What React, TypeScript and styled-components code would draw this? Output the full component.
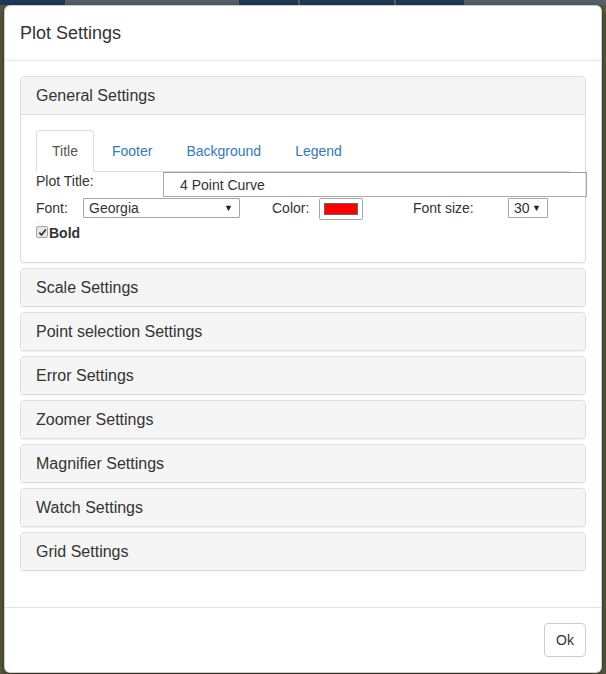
import React from "react";
import styled, { createGlobalStyle } from "styled-components";

const Global = createGlobalStyle`
  html, body { margin: 0; padding: 0; }
  body {
    width: 606px;
    height: 674px;
    overflow: hidden;
    font-family: "Liberation Sans", Arial, sans-serif;
    font-size: 14px;
    color: #333;
    background:
      linear-gradient(to right, #1f3a58 0 65px, #56616b 65px 239px, #1f3a58 239px 298px, #56616b 298px 300px, #1f3a58 300px 394px, #56616b 394px 396px, #1f3a58 396px 464px, #56616b 464px) top / 100% 5px no-repeat,
      #5c5a40;
  }
  * { box-sizing: border-box; }
`;

const Page = styled.div`
  padding: 5px 4px 0 4px;
`;

const Modal = styled.div`
  width: 598px;
  background: #fff;
  border: 1px solid rgba(0, 0, 0, 0.2);
  border-radius: 6px;
  box-shadow: 0 3px 9px rgba(0, 0, 0, 0.5);
`;

const Header = styled.div`
  padding: 15px;
  border-bottom: 1px solid #e5e5e5;
`;

const Title = styled.h4`
  margin: 0;
  font-size: 18px;
  font-weight: 500;
  line-height: 24px;
`;

const Body = styled.div`
  padding: 15px;
`;

const PanelGroup = styled.div`
  display: flex;
  flex-direction: column;
  gap: 5px;
  margin-bottom: 21px;
`;

const Panel = styled.div`
  border: 1px solid #ddd;
  border-radius: 4px;
  background: #fff;
  box-shadow: 0 1px 1px rgba(0, 0, 0, 0.05);
`;

const PanelHeading = styled.div<{ $open?: boolean }>`
  background: #f5f5f5;
  color: #333;
  padding: 10px 15px;
  border-radius: ${(p) => (p.$open ? "3px 3px 0 0" : "3px")};
  border-bottom: ${(p) => (p.$open ? "1px solid #ddd" : "none")};
  font-size: 16px;
  line-height: 17px;
`;

const PanelBody = styled.div`
  padding: 15px 15px 21px;
`;

const Tabs = styled.ul`
  display: flex;
  list-style: none;
  margin: 0;
  padding: 0;
  border-bottom: 1px solid #ddd;
`;

const Tab = styled.li<{ $active?: boolean }>`
  margin-right: 2px;
  margin-bottom: -1px;
  padding: 10px 15px;
  line-height: 20px;
  border: 1px solid ${(p) => (p.$active ? "#ddd" : "transparent")};
  border-bottom-color: transparent;
  border-radius: 4px 4px 0 0;
  background: ${(p) => (p.$active ? "#fff" : "transparent")};
  color: ${(p) => (p.$active ? "#555" : "#337ab7")};
`;

const Row = styled.div<{ $mt?: number; $start?: boolean }>`
  display: flex;
  align-items: ${(p) => (p.$start ? "flex-start" : "center")};
  margin-top: ${(p) => p.$mt ?? 0}px;
`;

const Label = styled.span<{ $w: number; $lh?: number }>`
  width: ${(p) => p.$w}px;
  flex: none;
  line-height: ${(p) => p.$lh ?? 20}px;
`;

const TextInput = styled.div`
  width: 424px;
  height: 25px;
  flex: none;
  border: 1px solid #a9a9a9;
  border-top-color: #999;
  padding-left: 16px;
  display: flex;
  align-items: center;
  font-size: 14px;
  color: #333;
`;

const Select = styled.div<{ $w: number; $mr?: number }>`
  width: ${(p) => p.$w}px;
  height: 20px;
  flex: none;
  margin-right: ${(p) => p.$mr ?? 0}px;
  border: 1px solid #a6a6a6;
  border-radius: 1px;
  display: flex;
  align-items: center;
  justify-content: space-between;
  padding: 0 6px 0 5px;
  font-size: 14px;
  color: #333;
`;

const Arrow = styled.span`
  font-size: 9px;
  color: #222;
`;

const ColorButton = styled.div`
  width: 44px;
  height: 22px;
  flex: none;
  margin-right: 50px;
  border: 1px solid #a6a6a6;
  border-radius: 2px;
  background: #fff;
  display: flex;
  align-items: center;
  justify-content: center;
`;

const Swatch = styled.span`
  width: 34px;
  height: 12px;
  background: #ff0000;
  border: 1px solid #666;
`;

const Check = styled.span`
  width: 12px;
  height: 12px;
  flex: none;
  border: 1px solid #a6a6a6;
  border-radius: 2px;
  background: #e6e6e6;
  display: flex;
  align-items: center;
  justify-content: center;
  margin-right: 1px;
  margin-top: -2px;
`;

const Bold = styled.span`
  font-weight: 700;
  font-size: 14px;
`;

const Footer = styled.div`
  padding: 15px;
  border-top: 1px solid #e5e5e5;
  display: flex;
  justify-content: flex-end;
`;

const Button = styled.button`
  font-family: "Liberation Sans", Arial, sans-serif;
  font-size: 14px;
  line-height: 20px;
  padding: 6px 11px;
  color: #333;
  background: #fff;
  border: 1px solid #ccc;
  border-radius: 4px;
`;

const sections = [
  "Scale Settings",
  "Point selection Settings",
  "Error Settings",
  "Zoomer Settings",
  "Magnifier Settings",
  "Watch Settings",
  "Grid Settings",
];

export default function App() {
  return (
    <>
      <Global />
      <Page>
        <Modal>
          <Header>
            <Title>Plot Settings</Title>
          </Header>
          <Body>
            <PanelGroup>
              <Panel>
                <PanelHeading $open>General Settings</PanelHeading>
                <PanelBody>
                  <Tabs>
                    <Tab $active>Title</Tab>
                    <Tab>Footer</Tab>
                    <Tab>Background</Tab>
                    <Tab>Legend</Tab>
                  </Tabs>
                  <Row $start>
                    <Label $w={127} $lh={18}>Plot Title:</Label>
                    <TextInput>4 Point Curve</TextInput>
                  </Row>
                  <Row $start $mt={1}>
                    <Label $w={47}>Font:</Label>
                    <Select $w={157} $mr={32}>
                      <span>Georgia</span>
                      <Arrow>▼</Arrow>
                    </Select>
                    <Label $w={47}>Color:</Label>
                    <ColorButton>
                      <Swatch />
                    </ColorButton>
                    <Label $w={95}>Font size:</Label>
                    <Select $w={40}>
                      <span>30</span>
                      <Arrow>▼</Arrow>
                    </Select>
                  </Row>
                  <Row $mt={5}>
                    <Check>
                      <svg width="9" height="9" viewBox="0 0 10 10">
                        <path d="M1.5 5.2 L4 7.8 L8.6 1.6" fill="none" stroke="#333" strokeWidth="1.8" />
                      </svg>
                    </Check>
                    <Bold>Bold</Bold>
                  </Row>
                </PanelBody>
              </Panel>
              {sections.map((s) => (
                <Panel key={s}>
                  <PanelHeading>{s}</PanelHeading>
                </Panel>
              ))}
            </PanelGroup>
          </Body>
          <Footer>
            <Button>Ok</Button>
          </Footer>
        </Modal>
      </Page>
    </>
  );
}
